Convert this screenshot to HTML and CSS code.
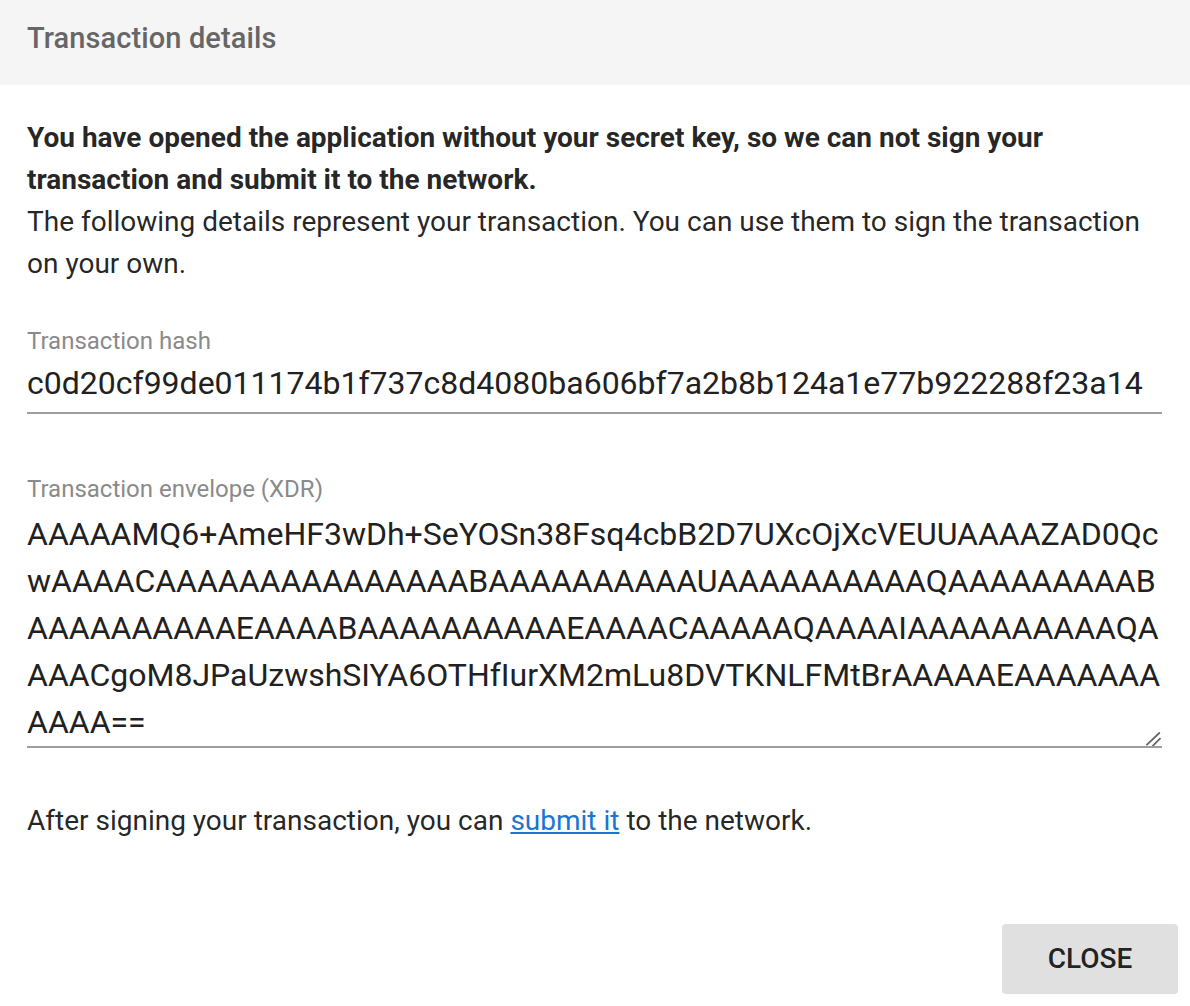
FILE: index.html
```html
<!DOCTYPE html>
<html lang="en">
<head>
<meta charset="utf-8">
<title>Transaction details</title>
<link rel="stylesheet" href="styles.css">
</head>
<body>
<div class="dialog">
  <header class="dialog-header">
    <h2 class="dialog-title">Transaction details</h2>
  </header>
  <main class="dialog-body">
    <p class="intro"><strong class="intro-warning">You have opened the application without your secret key, so we can not sign your transaction and submit it to the network.</strong>The following details represent your transaction. You can use them to sign the transaction on your own.</p>
    <div class="field">
      <label class="field-label">Transaction hash</label>
      <div class="field-value">c0d20cf99de011174b1f737c8d4080ba606bf7a2b8b124a1e77b922288f23a14</div>
    </div>
    <div class="field field-xdr">
      <label class="field-label">Transaction envelope (XDR)</label>
      <div class="field-value field-multiline">AAAAAMQ6+AmeHF3wDh+SeYOSn38Fsq4cbB2D7UXcOjXcVEUUAAAAZAD0Qc<!--
      -->wAAAAC<!---->AAAAA<!---->AAAAA<!---->AAAAA<!---->B<!---->AAAAA<!---->AAAAA<!---->U<!---->AAAAA<!---->AAAAA<!---->Q<!---->AAAAA<!---->AAAA<!---->B<!--
      -->AAAAA<!---->AAAAA<!---->E<!---->AAAA<!---->B<!---->AAAAA<!---->AAAAA<!---->E<!---->AAAA<!---->C<!---->AAAAA<!---->Q<!---->AAAA<!---->I<!---->AAAAA<!---->AAAAA<!---->Q<!---->A<!--
      -->AAA<!---->C<!---->goM8JPaUzwshSIYA6OTHfIurXM2mLu8DVTKNLFMtBr<!---->AAAAA<!---->E<!---->AAAAA<!---->AAAAA<!---->A<!---->==<svg class="grip" width="16" height="16" viewBox="0 0 16 16" aria-hidden="true"><path d="M1 14.7 L13.3 3 M7 15.7 L14 8.7" stroke="#666" stroke-width="1.8" stroke-linecap="round" fill="none"/></svg></div>
    </div>
    <p class="after">After signing your transaction, you can <a class="link" href="#">submit it</a> to the network.</p>
  </main>
  <footer class="dialog-actions">
    <button class="btn" type="button">CLOSE</button>
  </footer>
</div>
</body>
</html>
```
FILE: styles.css
```css
* { box-sizing: border-box; }

body {
  margin: 0;
  background: #fff;
  font-family: Roboto, "Noto Sans", "Liberation Sans", sans-serif;
  color: rgba(0, 0, 0, 0.87);
}

.dialog-header {
  height: 85px;
  background: #f5f5f5;
  padding: 24px 27px 0;
}

.dialog-title {
  margin: 0;
  font-size: 29px;
  font-weight: 500;
  line-height: 28px;
  letter-spacing: 0.1px;
  color: #666;
}

.dialog-body {
  padding: 32px 28px 0 27px;
}

.intro {
  margin: 0;
  font-size: 28px;
  line-height: 42px;
}

.intro-warning {
  display: block;
  font-weight: 700;
}

.field {
  margin-top: 41px;
}

.field-label {
  display: block;
  font-size: 24px;
  line-height: 30px;
  color: #8a8a8a;
}

.field-value {
  margin-top: 8px;
  font-size: 32px;
  line-height: 38px;
  padding-bottom: 10px;
  border-bottom: 2px solid #9e9e9e;
  color: #212121;
}

.field-xdr {
  margin-top: 60px;
}

.field-multiline {
  position: relative;
  margin-top: 7px;
  line-height: 47px;
  padding-bottom: 0;
  word-break: break-all;
}

.grip {
  position: absolute;
  right: 0;
  bottom: 0;
}

.after {
  margin: 52px 0 0;
  font-size: 28px;
  line-height: 42px;
}

.link {
  color: #1976d2;
  text-decoration: underline;
}

.dialog-actions {
  display: flex;
  justify-content: flex-end;
  padding: 82px 12px 12px;
}

.btn {
  width: 176px;
  height: 70px;
  border: 0;
  border-radius: 4px;
  background: #e0e0e0;
  font-family: Roboto, "Noto Sans", sans-serif;
  font-size: 28px;
  font-weight: 500;
  line-height: 1;
  color: rgba(0, 0, 0, 0.87);
}
```
